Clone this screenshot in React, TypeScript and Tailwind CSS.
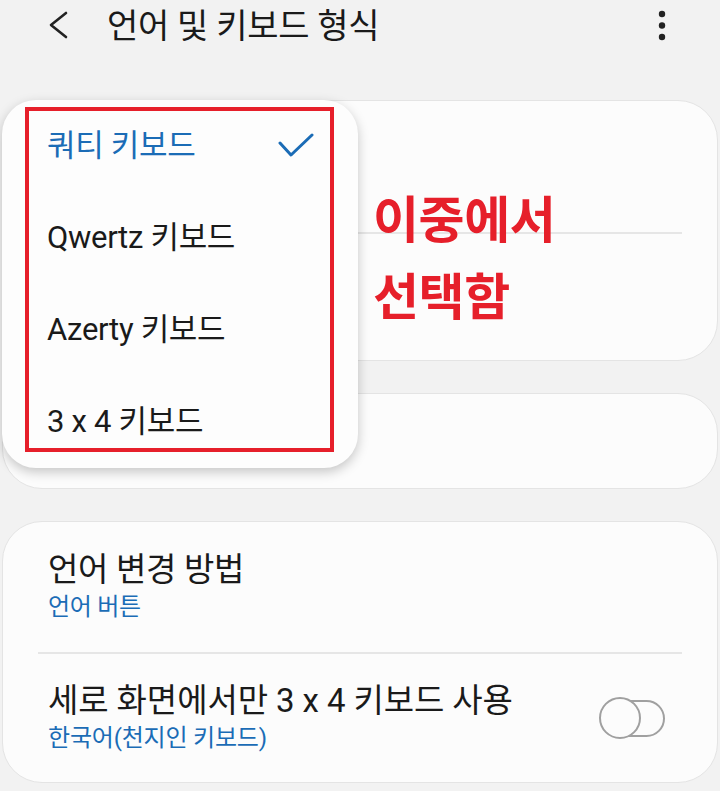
const sans = "font-['Roboto','Noto_Sans_CJK_KR',sans-serif]";

const options = [
  { label: "쿼티 키보드", selected: true },
  { label: "Qwertz 키보드", selected: false },
  { label: "Azerty 키보드", selected: false },
  { label: "3 x 4 키보드", selected: false },
];

function Toggle() {
  return (
    <div className="relative h-[42px] w-[66px]">
      <div className="absolute left-[12px] top-[3px] h-[37px] w-[54px] rounded-full border-2 border-[#a0a0a0]" />
      <div className="absolute left-0 top-0 h-[42px] w-[42px] rounded-full border-2 border-[#a0a0a0] bg-[#fcfcfc]" />
    </div>
  );
}

export default function App() {
  return (
    <div className={`${sans} relative h-[791px] w-[720px] overflow-hidden bg-[#f2f2f2] text-[#1a1a1a]`}>
      {/* Top bar */}
      <header className="flex h-[52px] items-center pl-[46px] pr-[54px]">
        <svg width="24" height="30" viewBox="0 0 24 30" fill="none" stroke="#222" strokeWidth="2.6" strokeLinecap="round" strokeLinejoin="round">
          <polyline points="20 2 5 14 20 26" />
        </svg>
        <h1 className="ml-[37px] flex-1 text-[34px] leading-none tracking-[-0.3px] text-[#1a1a1a]">
          언어 및 키보드 형식
        </h1>
        <svg width="8" height="32" viewBox="0 0 8 32" fill="#222">
          <circle cx="4" cy="4" r="3.2" />
          <circle cx="4" cy="15.5" r="3.2" />
          <circle cx="4" cy="27" r="3.2" />
        </svg>
      </header>

      <main className="mt-[48px] flex flex-col gap-[32px] px-[2px]">
        {/* Card 1 */}
        <section className="flex h-[261px] flex-col rounded-[40px] border border-[#e4e4e4] bg-[#fcfcfc]">
          <div className="h-[131px]" />
          <div className="mx-[35px] h-[2px] bg-[#e6e6e6]" />
        </section>

        {/* Card 2 */}
        <section className="h-[96px] rounded-[40px] border border-[#e4e4e4] bg-[#fcfcfc]" />

        {/* Card 3 */}
        <section className="flex h-[262px] flex-col rounded-[40px] border border-[#e4e4e4] bg-[#fcfcfc]">
          <div className="flex h-[130px] flex-col justify-center pl-[45px]">
            <p className="text-[33px] leading-[40px] tracking-[-0.3px]">언어 변경 방법</p>
            <p className="text-[24px] leading-[34px] tracking-[-0.3px] text-[#1b6cb6]">언어 버튼</p>
          </div>
          <div className="mx-[35px] h-[2px] bg-[#e6e6e6]" />
          <div className="flex flex-1 items-center justify-between pl-[45px] pr-[52px]">
            <div className="flex flex-col">
              <p className="text-[33px] leading-[40px] tracking-[-0.1px]">세로 화면에서만 3 x 4 키보드 사용</p>
              <p className="text-[24px] leading-[34px] tracking-[-0.2px] text-[#1b6cb6]">한국어(천지인 키보드)</p>
            </div>
            <Toggle />
          </div>
        </section>
      </main>

      {/* Dropdown popup */}
      <div className="absolute left-[2px] top-[100px] flex h-[368px] w-[356px] flex-col rounded-[34px] bg-[#fdfdfd] shadow-[0_4px_12px_rgba(0,0,0,0.22)]">
        {options.map((o) => (
          <div key={o.label} className="flex h-[92.5px] items-center justify-between pl-[45px] pr-[44px]">
            <span className={`text-[31px] tracking-[-0.3px] ${o.selected ? "text-[#1b6cb6]" : "text-[#1a1a1a]"}`}>
              {o.label}
            </span>
            {o.selected && (
              <svg width="36" height="26" viewBox="0 0 36 26" fill="none" stroke="#1b6cb6" strokeWidth="3" strokeLinecap="round" strokeLinejoin="round">
                <polyline points="2 10 13 22 34 2" />
              </svg>
            )}
          </div>
        ))}
      </div>

      {/* Annotation */}
      <div className="pointer-events-none absolute left-[25px] top-[107px] h-[345px] w-[309px] border-[4px] border-[#e61f2a]" />
      <div className="pointer-events-none absolute left-[373px] top-[191px] flex flex-col gap-[17px] text-[50px] font-bold leading-[60px] tracking-[-0.4px] text-[#e61f2a]">
        <span>이중에서</span>
        <span>선택함</span>
      </div>
    </div>
  );
}
